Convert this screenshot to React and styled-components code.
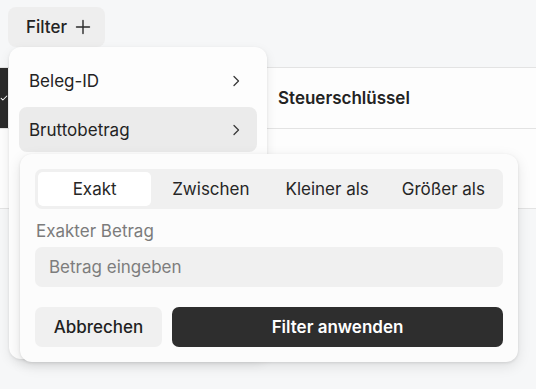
import React from 'react';
import styled, { createGlobalStyle } from 'styled-components';

const GlobalStyle = createGlobalStyle`
    html, body {
        margin: 0;
        padding: 0;
        background: #f6f7f8;
        font-family: Inter, "Noto Sans", sans-serif;
        color: #232323;
    }
`;

function PlusIcon() {
    return (
        <svg width="16" height="16" viewBox="0 0 16 16" fill="none" stroke="#2a2a2a" strokeWidth="1.4" strokeLinecap="round">
            <path d="M8 1.5v13M1.5 8h13" />
        </svg>
    );
}

function ChevronIcon() {
    return (
        <svg width="14" height="14" viewBox="0 0 14 14" fill="none" stroke="#3a3a3a" strokeWidth="1.3" strokeLinecap="round" strokeLinejoin="round">
            <path d="M5 2.5L9.5 7L5 11.5" />
        </svg>
    );
}

function CheckIcon() {
    return (
        <svg width="14" height="14" viewBox="0 0 14 14" fill="none" stroke="#fff" strokeWidth="1.8" strokeLinecap="round" strokeLinejoin="round">
            <path d="M2 7.5l3 3 7-7" />
        </svg>
    );
}

const tabs = ['Exakt', 'Zwischen', 'Kleiner als', 'Größer als'];

export default function App() {
    return (
        <Page>
            <GlobalStyle />
            <Toolbar>
                <FilterButton>
                    Filter
                    <PlusIcon />
                </FilterButton>
            </Toolbar>
            <Table>
                <HeaderRow>
                    <SelectCell>
                        <CheckIcon />
                    </SelectCell>
                    <HeadCell />
                    <HeadCell>Steuerschlüssel</HeadCell>
                </HeaderRow>
                <BodyRow />
            </Table>

            <Menu>
                <MenuItem>
                    Beleg-ID
                    <ChevronIcon />
                </MenuItem>
                <MenuItem $active>
                    Bruttobetrag
                    <ChevronIcon />
                </MenuItem>
            </Menu>

            <SubPanel>
                <Tabs>
                    {tabs.map((t, i) => (
                        <Tab key={t} $active={i === 0}>{t}</Tab>
                    ))}
                </Tabs>
                <Label>Exakter Betrag</Label>
                <Input placeholder="Betrag eingeben" />
                <Actions>
                    <CancelButton>Abbrechen</CancelButton>
                    <ApplyButton>Filter anwenden</ApplyButton>
                </Actions>
            </SubPanel>
        </Page>
    );
}

const Page = styled.div`
    position: relative;
    width: 536px;
    height: 389px;
    overflow: hidden;
    background: #f6f7f8;
    font-size: 17px;
`;

const Toolbar = styled.div`
    display: flex;
    padding: 7px 8px 20px;
`;

const FilterButton = styled.button`
    display: flex;
    align-items: center;
    gap: 8px;
    height: 40px;
    width: 97px;
    padding: 0 0 0 18px;
    border: none;
    border-radius: 8px;
    background: #eeeeee;
    font-family: inherit;
    font-size: 17px;
    font-weight: 500;
    color: #232323;
`;

const Table = styled.div`
    background: #fdfdfd;
    border-top: 1px solid #e3e3e3;
`;

const HeaderRow = styled.div`
    display: grid;
    grid-template-columns: 8px 270px 1fr;
    height: 60px;
    border-bottom: 1px solid #e3e3e3;
`;

const SelectCell = styled.div`
    display: flex;
    align-items: center;
    justify-content: flex-end;
    overflow: hidden;
    background: #2b2b2b;
`;

const HeadCell = styled.div`
    display: flex;
    align-items: center;
    font-weight: 600;
    color: #232323;
`;

const BodyRow = styled.div`
    height: 79px;
    border-bottom: 1px solid #e3e3e3;
`;

const Menu = styled.div`
    position: absolute;
    left: 9px;
    top: 47px;
    width: 258px;
    height: 312px;
    box-sizing: border-box;
    padding: 11px 10px;
    display: flex;
    flex-direction: column;
    gap: 4px;
    background: #fdfdfd;
    border-radius: 12px;
    box-shadow: 0 1px 3px rgba(0, 0, 0, 0.08), 0 4px 12px rgba(0, 0, 0, 0.08);
`;

const MenuItem = styled.div`
    display: flex;
    align-items: center;
    justify-content: space-between;
    height: 45px;
    padding: 0 14px 0 10px;
    border-radius: 8px;
    color: #232323;
    background: ${(p) => (p.$active ? '#ebebeb' : 'transparent')};
`;

const SubPanel = styled.div`
    position: absolute;
    left: 20px;
    top: 154px;
    width: 498px;
    box-sizing: border-box;
    padding: 15px;
    display: flex;
    flex-direction: column;
    background: #fcfcfc;
    border-radius: 12px;
    box-shadow: 0 1px 3px rgba(0, 0, 0, 0.1), 0 4px 14px rgba(0, 0, 0, 0.1);
`;

const Tabs = styled.div`
    display: grid;
    grid-template-columns: repeat(4, 1fr);
    gap: 3px;
    height: 40px;
    box-sizing: border-box;
    padding: 3px;
    border-radius: 7px;
    background: #f0f0f0;
`;

const Tab = styled.div`
    display: flex;
    align-items: center;
    justify-content: center;
    border-radius: 5px;
    color: #262626;
    background: ${(p) => (p.$active ? '#ffffff' : 'transparent')};
`;

const Label = styled.div`
    margin: 12px 0 6px 1px;
    line-height: 20px;
    color: #7b7b7b;
`;

const Input = styled.input`
    height: 40px;
    box-sizing: border-box;
    padding: 0 14px;
    border: none;
    border-radius: 7px;
    background: #f0f0f0;
    font-family: inherit;
    font-size: 17px;
    color: #232323;
    outline: none;

    &::placeholder {
        color: #7d7d7d;
    }
`;

const Actions = styled.div`
    display: flex;
    gap: 10px;
    margin-top: 20px;
`;

const CancelButton = styled.button`
    width: 127px;
    height: 40px;
    border: none;
    border-radius: 7px;
    background: #f0f0f0;
    font-family: inherit;
    font-size: 17px;
    font-weight: 500;
    color: #1f1f1f;
`;

const ApplyButton = styled.button`
    flex: 1;
    height: 40px;
    border: none;
    border-radius: 7px;
    background: #2e2e2e;
    font-family: inherit;
    font-size: 17px;
    font-weight: 600;
    color: #ffffff;
`;
